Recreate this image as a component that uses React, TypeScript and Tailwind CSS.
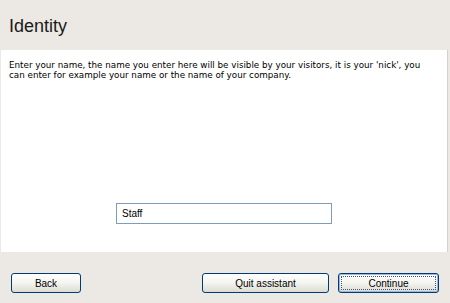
export default function App() {
  const btn =
    "h-[20px] rounded-[3px] border border-[#003c74] bg-gradient-to-b from-[#ffffff] via-[#f4f4f0] to-[#dcdcd4] text-[10px] text-black flex items-center justify-center [font-family:'Liberation_Sans',Arial,sans-serif]";
  return (
    <div className="w-[450px] h-[303px] bg-[#ece9e4] flex flex-col overflow-hidden">
      <div className="h-[50px] flex items-center pl-[9px] pt-[2px]">
        <span className="text-[18px] text-[#1a1a1a] [font-family:'Liberation_Sans',Arial,sans-serif]">
          Identity
        </span>
      </div>
      <div className="h-[202px] ml-[1px] mr-[2px] bg-white border-r border-[#d6d2ca] flex flex-col pt-[10px] pb-[28px]">
        <p className="px-[8px] text-[8.75px] leading-[10px] text-black [font-family:'DejaVu_Sans',sans-serif]">
          <span className="block whitespace-nowrap">
            Enter your name, the name you enter here will be visible by your visitors, it is your 'nick', you
          </span>
          <span className="block whitespace-nowrap">
            can enter for example your name or the name of your company.
          </span>
        </p>
        <div className="flex-1" />
        <div className="flex justify-center">
          <div className="w-[216px] h-[21px] border border-[#7f9db9] bg-white flex items-center pl-[5px] text-[10px] text-black [font-family:'Liberation_Sans',Arial,sans-serif]">
            Staff
          </div>
        </div>
      </div>
      <div className="flex items-start pt-[21px] pl-[11px] pr-[11px]">
        <button className={btn + " w-[70px]"}>Back</button>
        <div className="flex-1" />
        <button className={btn + " w-[127px]"}>Quit assistant</button>
        <button className={btn + " w-[101px] ml-[9px] border-[#003c74] shadow-[inset_0_0_0_1px_#98b8ea]"}>
          <span className="outline outline-1 outline-dotted outline-[#555] outline-offset-[-1px] w-[95px] h-[14px] flex items-center justify-center">
            Continue
          </span>
        </button>
      </div>
    </div>
  );
}
